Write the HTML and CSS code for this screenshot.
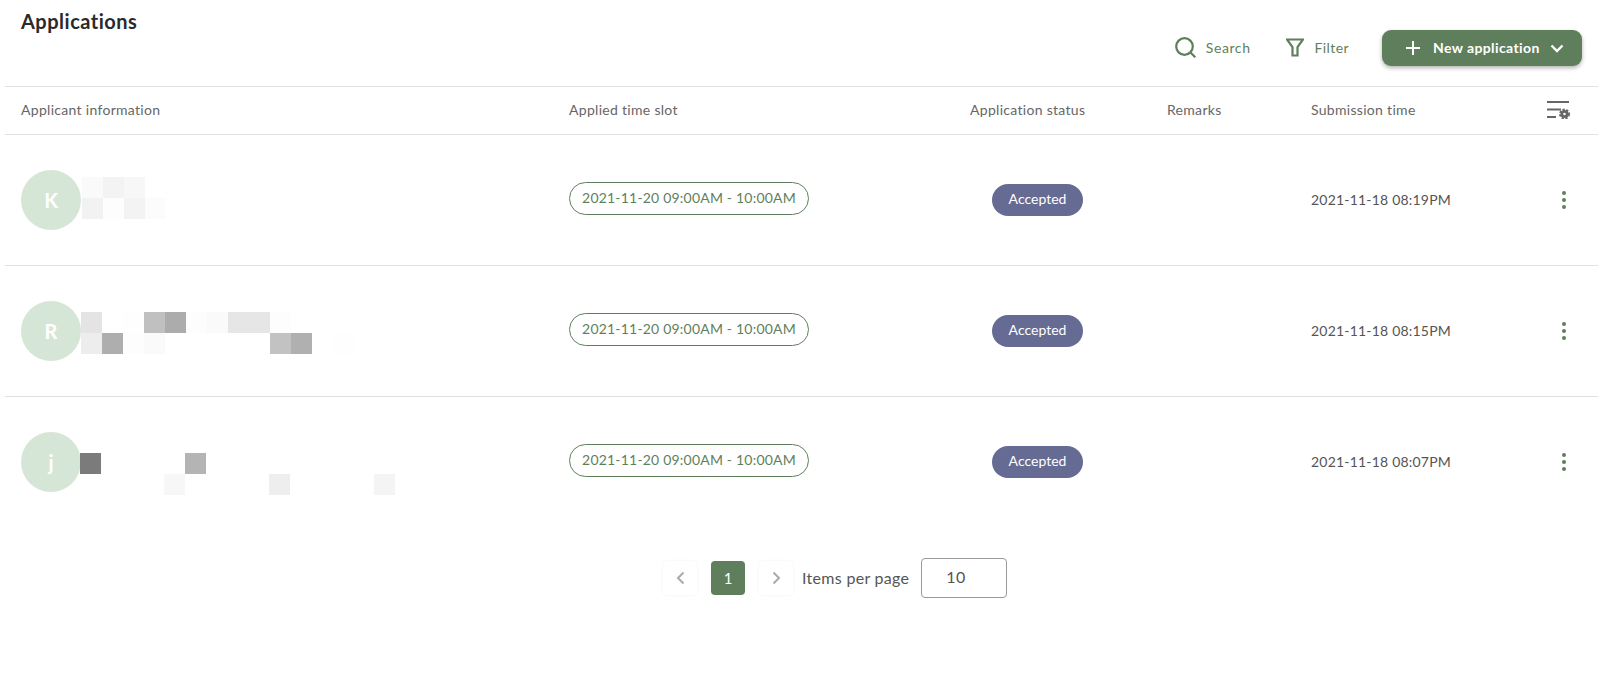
FILE: index.html
```html
<!DOCTYPE html>
<html lang="en">
<head>
<meta charset="utf-8">
<title>Applications</title>
<link rel="stylesheet" href="styles.css">
</head>
<body>
<main class="page">
  <header class="topbar">
    <h1 class="title">Applications</h1>
    <div class="actions">
      <button class="action action-search">
        <svg width="21" height="21" viewBox="0 0 21 21" fill="none" stroke="currentColor" stroke-width="2.200"><circle cx="9.500" cy="9.500" r="8.300"/><path d="M15.500 15.500 20.300 20.300"/></svg>
        <span>Search</span>
      </button>
      <button class="action action-filter">
        <svg width="18" height="19" viewBox="0 0 18 19" fill="none" stroke="currentColor" stroke-width="2.200"><path d="M1 1.500h16l-5.500 7.500v8.500h-5v-8.500z"/></svg>
        <span>Filter</span>
      </button>
      <button class="primary">
        <svg width="16" height="16" viewBox="0 0 16 16" fill="none" stroke="currentColor" stroke-width="2"><path d="M8 1v14M1 8h14"/></svg>
        <span class="primary-label">New application</span>
        <svg width="14" height="9" viewBox="0 0 14 9" fill="none" stroke="currentColor" stroke-width="2.400"><path d="M1.500 1.500 7 7l5.500-5.500"/></svg>
      </button>
    </div>
  </header>

  <div class="row row-head">
    <div class="col-info">Applicant information</div>
    <div class="col-slot">Applied time slot</div>
    <div class="col-status">Application status</div>
    <div class="col-remarks">Remarks</div>
    <div class="col-time">Submission time</div>
    <div class="col-menu">
      <svg class="table-settings" width="23" height="18" viewBox="0 0 23 18"><path d="M0 1h22M0 8.500h14M0 16h9" stroke="#666" stroke-width="2.200" fill="none"/><circle cx="17.500" cy="13" r="2.700" fill="none" stroke="#666" stroke-width="2.800"/><circle cx="17.500" cy="13" r="4.600" fill="none" stroke="#666" stroke-width="1.800" stroke-dasharray="2.300 1.517"/></svg>
    </div>
  </div>

  <div class="row row-body">
    <div class="col-info">
      <div class="avatar">K</div>
      <svg class="mosaic mosaic-k" width="84" height="42" viewBox="0 0 84 42" shape-rendering="crispEdges">
        <rect x="0" width="21" height="21" fill="#fafafa"/><rect x="21" width="21" height="21" fill="#f3f3f3"/><rect x="42" width="21" height="21" fill="#f7f7f7"/>
        <rect x="0" y="21" width="21" height="21" fill="#f2f2f2"/><rect x="21" y="21" width="21" height="21" fill="#fdfdfd"/><rect x="42" y="21" width="21" height="21" fill="#f3f3f3"/><rect x="63" y="21" width="21" height="21" fill="#fcfcfc"/>
      </svg>
    </div>
    <div class="col-slot"><span class="slot">2021-11-20 09:00AM - 10:00AM</span></div>
    <div class="col-status"><span class="badge">Accepted</span></div>
    <div class="col-remarks"></div>
    <div class="col-time">2021-11-18 08:19PM</div>
    <div class="col-menu"><span class="dots"><i></i><i></i><i></i></span></div>
  </div>

  <div class="row row-body">
    <div class="col-info">
      <div class="avatar">R</div>
      <svg class="mosaic mosaic-r" width="273" height="42" viewBox="0 0 273 42" shape-rendering="crispEdges">
        <rect x="0" width="21" height="21" fill="#e4e4e4"/><rect x="42" width="21" height="21" fill="#fefefe"/><rect x="63" width="21" height="21" fill="#c0c0c0"/><rect x="84" width="21" height="21" fill="#acacac"/><rect x="105" width="21" height="21" fill="#fdfdfd"/><rect x="126" width="21" height="21" fill="#fafafa"/><rect x="147" width="42" height="21" fill="#e6e6e6"/><rect x="189" width="21" height="21" fill="#fdfdfd"/>
        <rect x="0" y="21" width="21" height="21" fill="#ededed"/><rect x="21" y="21" width="21" height="21" fill="#aeaeae"/><rect x="42" y="21" width="21" height="21" fill="#fdfdfd"/><rect x="63" y="21" width="21" height="21" fill="#fafafa"/><rect x="189" y="21" width="21" height="21" fill="#c2c2c2"/><rect x="210" y="21" width="21" height="21" fill="#b0b0b0"/><rect x="252" y="21" width="21" height="21" fill="#fefefe"/>
      </svg>
    </div>
    <div class="col-slot"><span class="slot">2021-11-20 09:00AM - 10:00AM</span></div>
    <div class="col-status"><span class="badge">Accepted</span></div>
    <div class="col-remarks"></div>
    <div class="col-time">2021-11-18 08:15PM</div>
    <div class="col-menu"><span class="dots"><i></i><i></i><i></i></span></div>
  </div>

  <div class="row row-body row-last">
    <div class="col-info">
      <div class="avatar">j</div>
      <svg class="mosaic mosaic-j" width="315" height="42" viewBox="0 0 315 42" shape-rendering="crispEdges">
        <rect x="0" width="21" height="21" fill="#7b7b7b"/><rect x="105" width="21" height="21" fill="#b4b4b4"/>
        <rect x="84" y="21" width="21" height="21" fill="#f7f7f7"/><rect x="189" y="21" width="21" height="21" fill="#eeeeee"/><rect x="294" y="21" width="21" height="21" fill="#f4f4f4"/>
      </svg>
    </div>
    <div class="col-slot"><span class="slot">2021-11-20 09:00AM - 10:00AM</span></div>
    <div class="col-status"><span class="badge">Accepted</span></div>
    <div class="col-remarks"></div>
    <div class="col-time">2021-11-18 08:07PM</div>
    <div class="col-menu"><span class="dots"><i></i><i></i><i></i></span></div>
  </div>

  <nav class="pager">
    <button class="page-arrow"><svg width="9" height="14" viewBox="0 0 9 14" fill="none" stroke="currentColor" stroke-width="2"><path d="M7.500 1.500 2 7l5.500 5.500"/></svg></button>
    <button class="page-num">1</button>
    <button class="page-arrow"><svg width="9" height="14" viewBox="0 0 9 14" fill="none" stroke="currentColor" stroke-width="2"><path d="M1.500 1.500 7 7l-5.500 5.500"/></svg></button>
    <span class="per-label">Items per page</span>
    <div class="per-input">10</div>
  </nav>
</main>
</body>
</html>
```

FILE: styles.css
```css
* { box-sizing: border-box; }
html, body { margin: 0; background: #fff; }
body { font-family: "Lato", "Noto Sans", sans-serif; color: #555; font-size: 14px; height: 677px; overflow: hidden; }
button { font: inherit; border: 0; background: none; padding: 0; }

.page { width: 1610px; padding: 0 12px 0 5px; }

.topbar { display: flex; justify-content: space-between; height: 87px; border-bottom: 1px solid #e0e0e0; padding: 0 16px; }
.title { margin: 9px 0 0; font-size: 20px; line-height: 24px; font-weight: 700; color: #2a2a2a; letter-spacing: .5px; }
.actions { display: flex; align-items: flex-start; padding-top: 30px; }
.action { display: flex; align-items: center; height: 34px; color: #5f7f5c; font-size: 14px; letter-spacing: .6px; }
.action-search { gap: 10px; }
.action-filter { gap: 11px; margin-left: 35px; letter-spacing: .4px; }
.primary { display: flex; align-items: center; width: 200px; height: 36px; margin-left: 33px; padding-left: 23px; color: #fff; background: #5f7f5c; border-radius: 9px; box-shadow: 0 2px 4px rgba(0,0,0,.3); font-size: 14px; font-weight: 700; letter-spacing: .4px; }
.primary-label { margin-left: 12px; margin-right: 10px; padding-bottom: 2px; }

.row { display: grid; grid-template-columns: 564px 401px 197px 144px 1fr 68px; align-items: center; }
.row > div:first-child { padding-left: 16px; }
.row-head { height: 48px; padding-bottom: 2px; border-bottom: 1px solid #e0e0e0; color: #666; font-size: 14px; letter-spacing: .3px; }
.row-body { height: 131px; border-bottom: 1px solid #e0e0e0; }
.row-last { border-bottom-color: transparent; }
.col-info { display: flex; align-items: center; }
.col-slot, .col-status { display: flex; align-items: center; }
.col-menu { display: flex; justify-content: center; }
.table-settings { margin-right: 12px; }

.avatar { flex: none; width: 60px; height: 60px; border-radius: 50%; background: #d6e6d6; color: #fff; display: flex; align-items: center; justify-content: center; font-size: 20px; font-weight: 700; }
.mosaic { display: block; flex: none; }
.mosaic-k { margin: -4px 0 0 1px; }
.mosaic-r { margin: 4px 0 0 0; }
.mosaic-j { margin: 24px 0 0 -1px; }

.slot { display: block; height: 33px; line-height: 29px; width: 240px; text-align: center; margin-top: -3px; border: 1px solid #5f7f5c; border-radius: 17px; color: #5f7f5c; font-size: 14px; letter-spacing: .2px; }
.badge { display: block; width: 91px; height: 32px; line-height: 29px; margin-left: 22px; text-align: center; background: #666b94; color: #fff; border-radius: 16px; font-size: 14px; }
.row-body .col-time { padding-bottom: 2px; color: #555; font-size: 14px; letter-spacing: .2px; }

.dots { display: flex; flex-direction: column; gap: 3px; }
.dots i { display: block; width: 4px; height: 4px; border-radius: 50%; background: #5f7f5c; }

.pager { display: flex; align-items: center; margin-top: 30px; padding-left: 658px; height: 40px; }
.page-arrow { display: flex; align-items: center; justify-content: center; width: 34px; height: 34px; color: #aaa; border-radius: 4px; box-shadow: 0 0 3px rgba(0,0,0,.06); }
.page-num { width: 34px; height: 34px; margin: 0 14px; background: #5f7f5c; color: #fff; border-radius: 4px; font-size: 15px; font-weight: 400; }
.per-label { margin-left: 9px; color: #555; font-size: 16px; letter-spacing: .3px; padding-bottom: 1px; }
.per-input { width: 86px; height: 40px; margin-left: 12px; padding-left: 24px; line-height: 36px; border: 1px solid #999; border-radius: 4px; color: #555; font-size: 16px; letter-spacing: .3px; }
```
